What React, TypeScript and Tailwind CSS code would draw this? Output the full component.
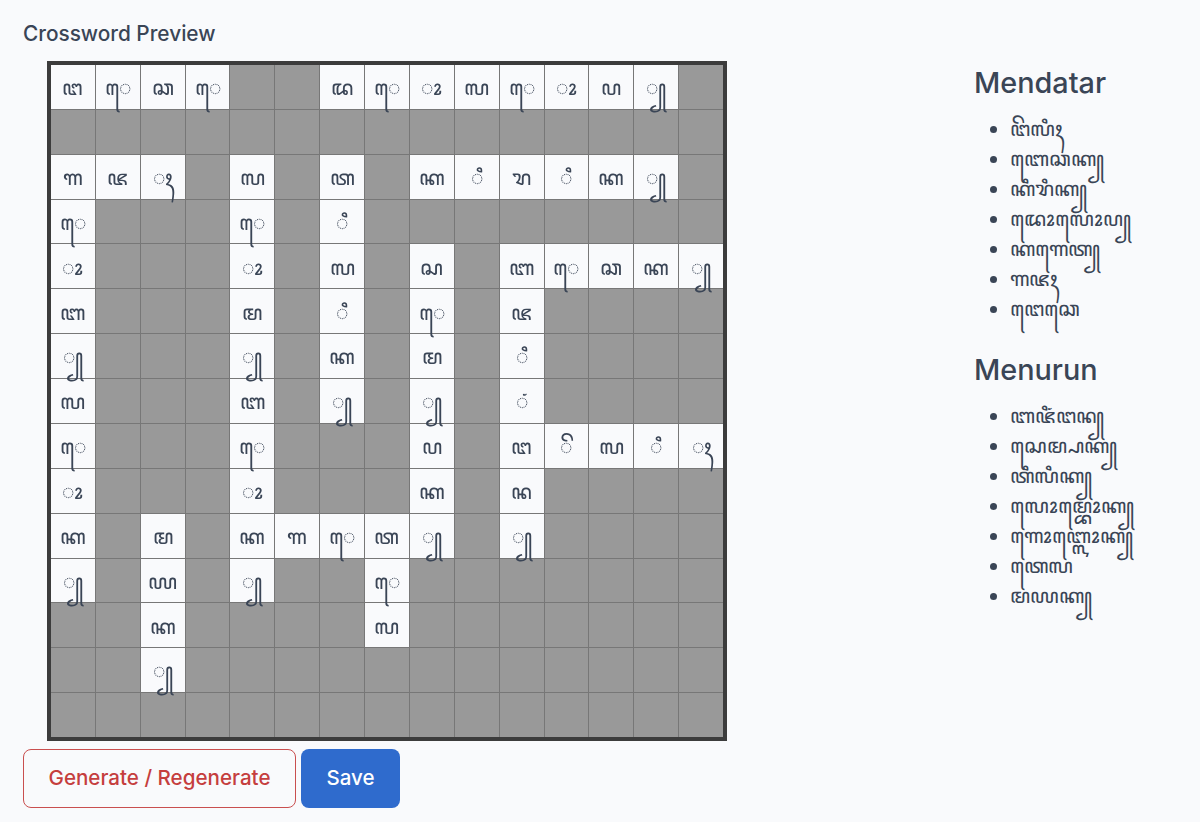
import React from "react";

const board = [
  ["ꦔ", "ꦺ", "ꦕ", "ꦺ", "", "", "ꦢ", "ꦺ", "ꦴ", "ꦭ", "ꦺ", "ꦴ", "ꦥ", "꧀", ""],
  ["", "", "", "", "", "", "", "", "", "", "", "", "", "", ""],
  ["ꦒ", "ꦗ", "ꦃ", "", "ꦭ", "", "ꦠ", "", "ꦏ", "ꦶ", "ꦫ", "ꦶ", "ꦏ", "꧀", ""],
  ["ꦺ", "", "", "", "ꦺ", "", "ꦶ", "", "", "", "", "", "", "", ""],
  ["ꦴ", "", "", "", "ꦴ", "", "ꦭ", "", "ꦱ", "", "ꦧ", "ꦺ", "ꦕ", "ꦏ", "꧀"],
  ["ꦧ", "", "", "", "ꦩ", "", "ꦶ", "", "ꦺ", "", "ꦗ", "", "", "", ""],
  ["꧀", "", "", "", "꧀", "", "ꦏ", "", "ꦩ", "", "ꦶ", "", "", "", ""],
  ["ꦭ", "", "", "", "ꦧ", "", "꧀", "", "꧀", "", "ꦁ", "", "", "", ""],
  ["ꦺ", "", "", "", "ꦺ", "", "", "", "ꦥ", "", "ꦔ", "ꦼ", "ꦭ", "ꦶ", "ꦃ"],
  ["ꦴ", "", "", "", "ꦴ", "", "", "", "ꦏ", "", "ꦤ", "", "", "", ""],
  ["ꦏ", "", "ꦩ", "", "ꦏ", "ꦒ", "ꦺ", "ꦠ", "꧀", "", "꧀", "", "", "", ""],
  ["꧀", "", "ꦪ", "", "꧀", "", "", "ꦺ", "", "", "", "", "", "", ""],
  ["", "", "ꦏ", "", "", "", "", "ꦭ", "", "", "", "", "", "", ""],
  ["", "", "꧀", "", "", "", "", "", "", "", "", "", "", "", ""],
  ["", "", "", "", "", "", "", "", "", "", "", "", "", "", ""],
];

const across = ["ꦔꦼꦭꦶꦃ", "ꦧꦺꦕꦏ꧀", "ꦏꦶꦫꦶꦏ꧀", "ꦢꦺꦴꦭꦺꦴꦥ꧀", "ꦏꦒꦺꦠ꧀", "ꦒꦗꦃ", "ꦔꦺꦕꦺ"];
const down = ["ꦧꦗꦶꦁꦔꦤ꧀", "ꦱꦺꦩ꧀ꦥꦏ꧀", "ꦠꦶꦭꦶꦏ꧀", "ꦭꦺꦴꦩ꧀ꦧꦺꦴꦏ꧀", "ꦒꦺꦴꦧ꧀ꦭꦺꦴꦏ꧀", "ꦠꦺꦭ", "ꦩꦪꦏ꧀"];

function ClueList({ title, clues }: { title: string; clues: string[] }) {
  return (
    <div>
      <h2 className="text-[28.8px] leading-[36px] font-[550] text-[#3a4556]">{title}</h2>
      <ul className="mt-[13px] list-disc pl-[36px] text-[20.7px] leading-[30px] text-[#3a4556]">
        {clues.map((clue) => (
          <li key={clue}>{clue}</li>
        ))}
      </ul>
    </div>
  );
}

export default function App() {
  return (
    <main className="flex h-[822px] w-[1200px] overflow-hidden bg-[#f9fafc] pl-[23px] font-['Inter',sans-serif]">
      <section className="w-[951px] pt-[22px]">
        <h1 className="text-[20.8px] leading-[24px] font-[550] text-[#3a4556]">Crossword Preview</h1>
        <div className="mt-[15px] ml-[24px] grid h-[680px] w-[680px] grid-cols-[repeat(15,1fr)] grid-rows-[repeat(15,1fr)] gap-px border-4 border-[#3c3c3c] bg-[#777777]">
          {board.flat().map((cell, i) => (
            <div
              key={i}
              className={
                cell
                  ? "flex items-center justify-center bg-[#f9fafc] pt-[2px] text-[21px] text-[#3a4556]"
                  : "bg-[#999999]"
              }
            >
              {cell && <span className="relative z-10 will-change-transform">{cell}</span>}
            </div>
          ))}
        </div>
        <div className="mt-2 flex gap-[5px]">
          <button className="h-[59px] w-[273px] rounded-lg border-[1.5px] border-[#c94f4f] text-[20.6px] font-[450] text-[#c53e3e]">
            Generate / Regenerate
          </button>
          <button className="h-[59px] w-[99px] rounded-lg bg-[#2f6bcd] text-[20.5px] font-[450] text-white">
            Save
          </button>
        </div>
      </section>
      <aside className="flex flex-col gap-[28px] pt-[65px]">
        <ClueList title="Mendatar" clues={across} />
        <ClueList title="Menurun" clues={down} />
      </aside>
    </main>
  );
}
